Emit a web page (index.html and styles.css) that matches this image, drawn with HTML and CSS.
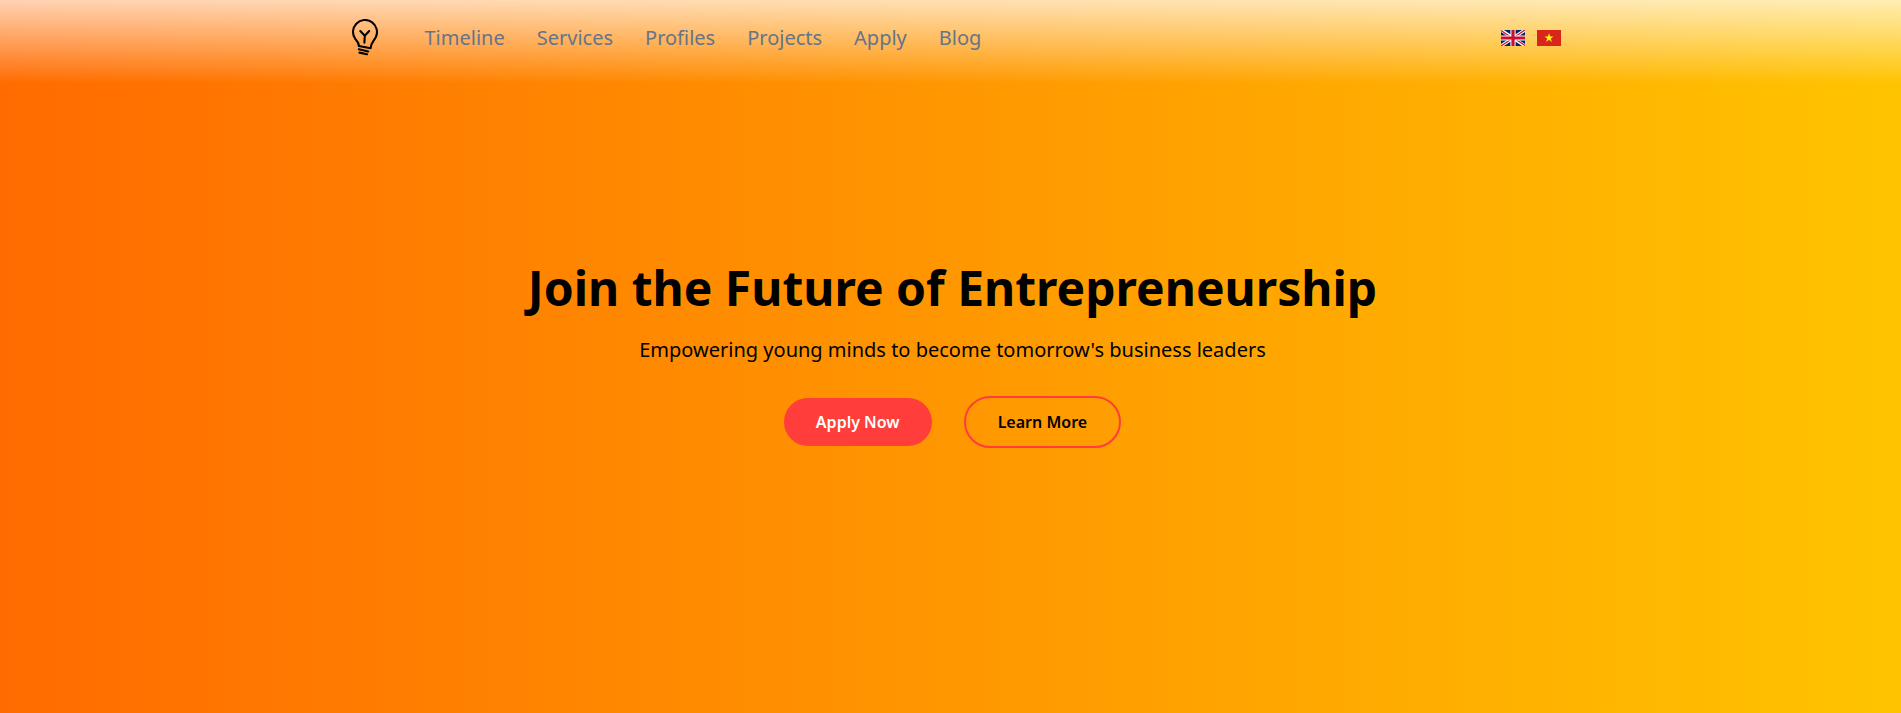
FILE: index.html
```html
<!DOCTYPE html>
<html lang="en">
<head>
<meta charset="utf-8">
<title>Join the Future of Entrepreneurship</title>
<link rel="stylesheet" href="styles.css">
</head>
<body>
<header class="header">
  <div class="bar">
    <a class="logo" aria-label="Home">
      <svg viewBox="0 0 30 38" width="30" height="38" fill="none" stroke="#000" stroke-width="2.1" stroke-linecap="round" stroke-linejoin="round">
        <path d="M8.8 27C9 23.4 7.3 22.5 5.4 20.2A12 12 0 1 1 25.8 18.2C24.4 21.6 20.9 23.6 20.6 29.2L8.8 27"/>
        <path d="M10.3 12L14.8 16.8M19.2 12L14.8 16.8L14.4 23.6"/>
        <path d="M8.8 30.3L18.2 32.5M9.4 33.6L17 35.2"/>
      </svg>
    </a>
    <nav class="nav">
      <a>Timeline</a><a>Services</a><a>Profiles</a><a>Projects</a><a>Apply</a><a>Blog</a>
    </nav>
    <div class="languages">
      <svg viewBox="0 0 60 40" width="24" height="16" aria-label="English">
        <path fill="#012169" d="M0 0h60v40H0z"/>
        <path stroke="#fff" stroke-width="8" d="M0 0L60 40M60 0L0 40"/>
        <path stroke="#c8102e" stroke-width="3" d="M0 1.5L30 21.5M60 38.5L30 18.5M60 0L30 20M0 40L30 20"/>
        <path stroke="#fff" stroke-width="13" d="M30 0V40M0 20H60"/>
        <path stroke="#c8102e" stroke-width="8" d="M30 0V40M0 20H60"/>
      </svg>
      <svg viewBox="0 0 60 40" width="24" height="16" aria-label="Vietnamese">
        <path fill="#da251d" d="M0 0h60v40H0z"/>
        <path fill="#ff0" d="M30 8L32.7 16.3H41.4L34.4 21.4L37.1 29.7L30 24.6L22.9 29.7L25.6 21.4L18.6 16.3H27.3z"/>
      </svg>
    </div>
  </div>
</header>
<main class="hero">
  <h1 class="title">Join the Future of Entrepreneurship</h1>
  <p class="subtitle">Empowering young minds to become tomorrow's business leaders</p>
  <div class="actions">
    <a class="button primary">Apply Now</a>
    <a class="button outline">Learn More</a>
  </div>
</main>
</body>
</html>
```
FILE: styles.css
```css
* { box-sizing: border-box; margin: 0; }
body {
  height: 713px;
  overflow: hidden;
  background: linear-gradient(to right, #ff6b00, #ff9700 50%, #ffc400);
  font-family: "Noto Sans", sans-serif;
  color: #000;
}
.header {
  height: 84px;
  background: linear-gradient(to bottom, rgba(255, 255, 255, .7), rgba(255, 255, 255, 0));
}
.bar {
  display: flex;
  align-items: center;
  width: 1211px;
  height: 76px;
  margin-left: 350px;
}
.logo { display: flex; width: 30px; }
.nav {
  display: flex;
  gap: 32px;
  margin-left: 44.5px;
  font-size: 20px;
  line-height: 28px;
  color: #64748b;
}
.languages { display: flex; gap: 12px; margin-left: auto; }
.hero {
  display: flex;
  flex-direction: column;
  align-items: center;
  padding: 180px 0 0 4px;
}
.title { font-size: 48px; line-height: 48px; font-weight: 700; }
.subtitle { margin-top: 24px; font-size: 20px; line-height: 28px; }
.actions { display: flex; align-items: center; gap: 32px; margin-top: 32px; }
.button {
  padding: 12px 32px;
  border-radius: 26px;
  font-size: 16px;
  line-height: 24px;
  font-weight: 600;
}
.primary { background: #ff3d3a; color: #fff; }
.outline { border: 2px solid #ff3d3a; }
```
